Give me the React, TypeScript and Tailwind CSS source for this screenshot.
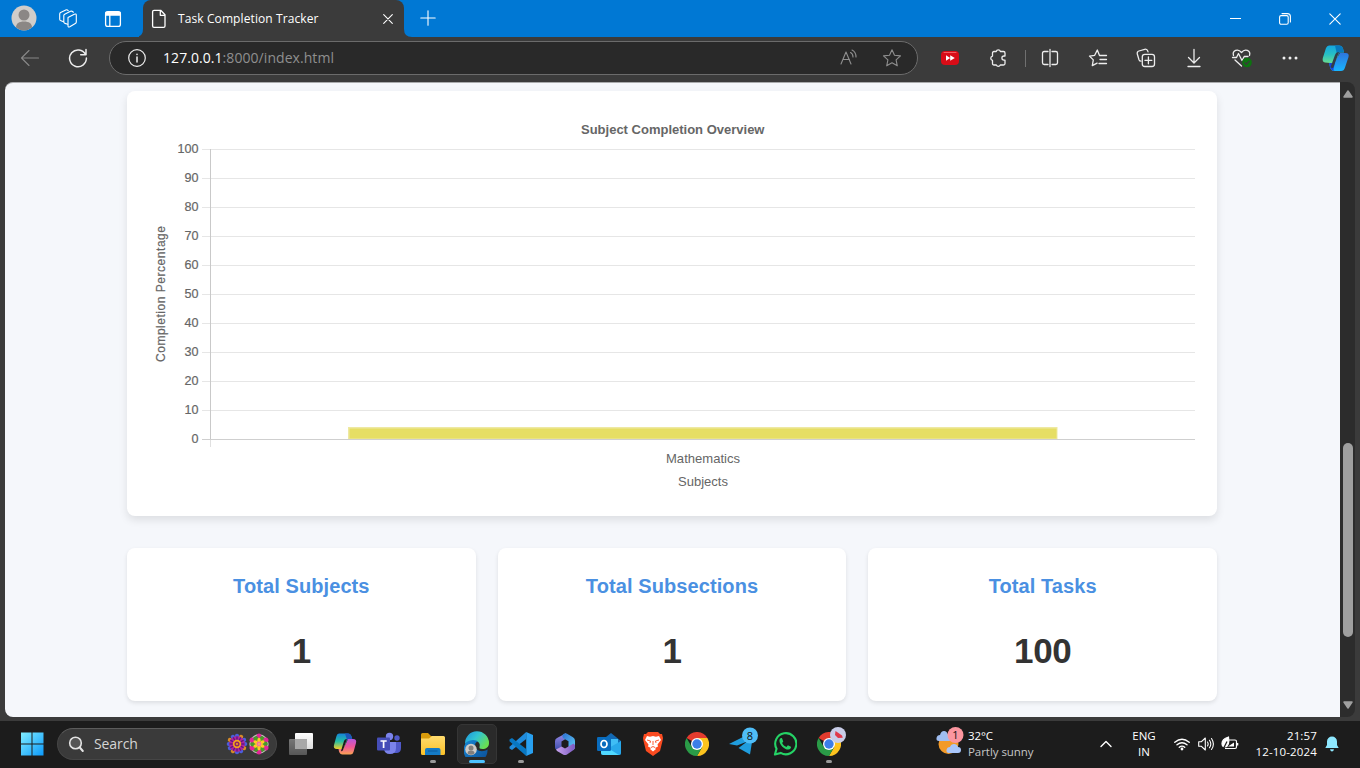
import React from "react";

const ui = "font-['Open_Sans','Noto_Sans',sans-serif]";

function Slot({ children, className = "w-12" }: { children?: React.ReactNode; className?: string }) {
  return <div className={`flex h-full shrink-0 items-center justify-center ${className}`}>{children}</div>;
}

function Icon({ s = 20, vb = 20, children, stroke = "#ededed", sw = 1.1 }: { s?: number; vb?: number; children: React.ReactNode; stroke?: string; sw?: number }) {
  return (
    <svg width={s} height={s} viewBox={`0 0 ${vb} ${vb}`} fill="none" stroke={stroke} strokeWidth={sw} strokeLinecap="round" strokeLinejoin="round" className="block shrink-0">
      {children}
    </svg>
  );
}

function TabBar() {
  return (
    <div className="flex h-[37px] shrink-0 bg-[#0078d4]">
      <Slot className="w-[48px] pb-px">
        <svg width="26" height="26" viewBox="0 0 26 26" className="block">
          <circle cx="13" cy="13" r="12.5" fill="#d0cdca" />
          <circle cx="13" cy="10" r="5.5" fill="#8b8785" />
          <path d="M5 22.5c0-4 3-6 8-6s8 2 8 6a12.500 12.500 0 0 1-16 0Z" fill="#8b8785" />
        </svg>
      </Slot>
      <Slot className="w-[39px]">
        <Icon stroke="#fff">
          <path d="M10 8.600 16.300 5.200q2-.8 2 1V13q0 1-1 1.500l-5.500 3.200q-1.800.9-1.800-1Z" />
          <path d="M9.800 15.200 7 14.400q-1.200-.4-1.200-1.600V6.600q0-.9.900-1.400L12.500 2.300q.8-.4 1.600 0l1.300.9" />
          <path d="M5.600 12.700 3 11.800q-1.300-.4-1.300-1.600V4.900q0-.9.900-1.400L7.800 1q.8-.4 1.600 0l.8.6" />
        </Icon>
      </Slot>
      <Slot className="w-[52px]">
        <Icon stroke="#fff" sw={1.3}>
          <rect x="2.600" y="2.600" width="14.800" height="14.800" rx="2.200" />
          <path d="M3 3.500h14v2.500H3Z" fill="#fff" />
          <path d="M6.800 6v11" />
        </Icon>
      </Slot>
      <svg width="4" height="37" viewBox="0 0 4 37" className="block shrink-0"><path d="M4 29v8H-4Q4 37 4 29Z" fill="#3b3b3b" /></svg>
      <div className="flex h-full w-[261px] shrink-0 items-center rounded-t-lg bg-[#3b3b3b]">
        <Slot className="w-[32px]">
          <Icon stroke="#fff" sw={1.300}>
            <path d="M5 1.300h6.700l4.300 4.500v11.200q0 1.400-1.400 1.400H5q-1.400 0-1.400-1.400V2.700q0-1.400 1.400-1.400ZM11.300 1.600v4.700h4.500" />
          </Icon>
        </Slot>
        <div className={`${ui} ml-[3px] w-[197px] whitespace-nowrap text-[12px] leading-4 tracking-[0.1px] text-white`}>Task Completion Tracker</div>
        <Slot className="w-[25px]"><Icon s={10} vb={10} stroke="#fff"><path d="m.7.7 8.600 8.600M9.300.7.7 9.300" /></Icon></Slot>
      </div>
      <svg width="8" height="37" viewBox="0 0 8 37" className="block shrink-0"><path d="M0 29v8h8Q0 37 0 29Z" fill="#3b3b3b" /></svg>
      <Slot className="w-[32px] pb-px"><Icon s={16} vb={16} stroke="#fff"><path d="M8 .8v14.400M.8 8h14.400" /></Icon></Slot>
      <div className="flex-1" />
      <Slot className="w-[50px]"><svg width="11" height="11" className="block"><path d="M0 5.500h11" stroke="#fff" /></svg></Slot>
      <Slot className="w-[50px]">
        <Icon s={12} vb={12} stroke="#fff"><rect x=".6" y="2.600" width="8.600" height="8.600" rx="1.500" /><path d="M3 .6h5.400q3 0 3 3v5.400" /></Icon>
      </Slot>
      <Slot className="w-[50px]"><Icon s={12} vb={12} stroke="#fff"><path d="m.8.8 10.400 10.400M11.200.8.8 11.200" /></Icon></Slot>
    </div>
  );
}

function Toolbar() {
  return (
    <div className="flex h-[45px] shrink-0 items-center bg-[#3b3b3b] pb-[3px] pl-1.5">
      <Slot><Icon stroke="#888"><path d="M18.500 10H1.500M9 2.500 1.500 10 9 17.500" /></Icon></Slot>
      <Slot>
        <Icon sw={1.5}><path d="M17.500 6.500A8.400 8.400 0 1 0 18.400 10M18 1.500v5.300h-5.300" /></Icon>
      </Slot>
      <div className="ml-[7px] flex h-[34px] w-[809px] shrink-0 items-center rounded-full border border-[#6b6b6b] bg-[#292929]">
        <Slot className="ml-[7px] w-[40px]">
          <Icon sw={1.200}><circle cx="10" cy="10" r="8.300" /><path d="M10 9v5M10 6.200v.3" strokeWidth="1.500" /></Icon>
        </Slot>
        <div className={`${ui} ml-[6px] flex-1 whitespace-nowrap text-[14px] leading-5 tracking-[0.06px] text-[#8f8f8f]`}>
          <span className="text-white">127.0.0.1</span>:8000/index.html
        </div>
        <Slot className="w-[43px]">
          <Icon stroke="#8f8f8f"><path d="M2 16 7 4l5 12M3.800 11.500h6.700M11.500 4.500q2.500 1.200 2.500 4.500M13 2q4 2 4 7" /></Icon>
        </Slot>
        <Slot className="mr-[3px] w-[44px]">
          <Icon stroke="#8f8f8f"><path d="m10 1.800 2.500 5.400 6 .7-4.400 4 1.200 5.900-5.300-3-5.300 3 1.200-5.900-4.400-4 6-.7Z" /></Icon>
        </Slot>
      </div>
      <Slot className="ml-2 w-12">
        <svg width="18" height="14" viewBox="0 0 18 14" className="block">
          <rect width="18" height="14" rx="4" fill="#d90c17" /><path d="M3 1.500h12" stroke="#f45a5e" strokeLinecap="round" />
          <path d="M5 4.200 9.200 7 5 9.800ZM9.200 4.200 13.800 7 9.200 9.800Z" fill="#fff" />
        </svg>
      </Slot>
      <Slot>
        <Icon sw={1.3}><path d="M6 3.500h2.200a2.200 2.200 0 0 1 4.200 0H15.500q1.500 0 1.500 1.500V8h-1a2.100 2.100 0 0 0 0 4.200h1v3.300q0 1.500-1.500 1.500h-3.200a2.200 2.200 0 0 1-4 0H6q-1.500 0-1.500-1.500v-3.100a2.200 2.200 0 0 1 0-4.300V5Q4.500 3.500 6 3.500Z" /></Icon>
      </Slot>
      <Slot className="w-1"><div className="ml-[3px] h-[17px] w-[1px] bg-[#707070]" /></Slot>
      <Slot>
        <Icon sw={1.3}><path d="M8 3.500H4.200Q2.500 3.500 2.500 5.200v9.600q0 1.700 1.700 1.700H8M12 3.500h3.800q1.700 0 1.700 1.700v9.600q0 1.700-1.700 1.700H12M10 1.500v17" /></Icon>
      </Slot>
      <Slot>
        <Icon sw={1.3}><path d="M11.500 7.500 9.300 2 6.700 7.300l-5.200.8 3.800 3.800-1 5.700 4.800-2.500M11.500 7.500H18.500M12 11.500h6.500M11 15.500h7.500" /></Icon>
      </Slot>
      <Slot>
        <Icon sw={1.3}><path d="M5 13.200a2.300 2.300 0 0 1-2-1.500L1.300 6a2.400 2.400 0 0 1 1.600-3L8.700 1.300a2.400 2.400 0 0 1 3 1.600l.3 1" /><rect x="6.300" y="6.300" width="12.200" height="12.200" rx="2.500" /><path d="M12.400 9v6.800M9 12.400h6.800" /></Icon>
      </Slot>
      <Slot>
        <Icon sw={1.3}><path d="M10 1.500v13M4.500 9.500 10 15l5.500-5.500M4 18.500h12" /></Icon>
      </Slot>
      <Slot>
        <svg width="22" height="20" viewBox="0 0 22 20" fill="none" stroke="#ededed" strokeWidth="1.300" strokeLinejoin="round" strokeLinecap="round" className="block">
          <path d="M2.500 7.500C1 2.500 7 0 10.500 4.500 14 0 20 2.500 18.500 7.500M1.500 9.500h4l2-4 3.500 7 2.200-4H17M4 12l6.500 6" />
          <circle cx="16" cy="14.500" r="4.800" fill="#0d7410" stroke="none" /><path d="m13.800 14.700 1.500 1.500 2.900-3.100" stroke="#3b3b3b" />
        </svg>
      </Slot>
      <Slot>
        <svg width="16" height="4" className="block" fill="#f0f0f0"><circle cx="2" cy="2" r="1.500" /><circle cx="8" cy="2" r="1.500" /><circle cx="14" cy="2" r="1.500" /></svg>
      </Slot>
      <Slot className="w-[44px]">
        <svg width="28" height="28" viewBox="0 0 28 28" className="block">
          <defs>
            <linearGradient id="ca" x1="0" y1="0" x2="0" y2="1"><stop stopColor="#14a6e0" /><stop offset=".5" stopColor="#27bfc5" /><stop offset="1" stopColor="#68dd91" /></linearGradient>
            <linearGradient id="cb" x1="0" y1="0" x2="0" y2="1"><stop stopColor="#2e75de" /><stop offset="1" stopColor="#18b5ff" /></linearGradient>
          </defs>
          <path d="M7 1.500h10q3 0 4 3l1 4h-5L14 19H8l-5-.5Q0 18 .8 14L4 4q1-2.500 3-2.500Z" fill="url(#ca)" />
          <path d="M13 1.500h4q3 0 4 3l1 4h-5l-2 2Z" fill="#0878bd" />
          <path d="M7 19h5l6-10h5.500q4 0 3 4L23 23.500Q22 27 19 27h-7q-3 0-4-4Z" fill="url(#cb)" />
          <path d="M7 19h6l-1.500 6q-.5 2 1.500 2-4 0-5-4Z" fill="#1748d8" />
          <path d="m17 8-5.500 15q-.7 2-3 .3L13 11q1-3 4-3Z" fill="#333d48" />
        </svg>
      </Slot>
    </div>
  );
}

function Chart() {
  const ticks = [100, 90, 80, 70, 60, 50, 40, 30, 20, 10, 0];
  return (
    <svg width="1090" height="425" viewBox="127 91 1090 425" className="block font-['Liberation_Sans',Arial,sans-serif]" fontSize="13" fill="#666">
      <text x="581" y="134" fontWeight="bold" textLength="183.500" lengthAdjust="spacingAndGlyphs">Subject Completion Overview</text>
      {ticks.map((t, i) => {
        const y = Math.round(149 + i * 28.950) + 0.500;
        return (
          <g key={t}>
            <path d={`M202 ${y}H1195`} stroke={t === 0 ? "#cfcfcf" : "#e6e6e6"} />
            <text x="198.500" y={y + 3.500} textAnchor="end" stroke="#666" strokeWidth=".2" textLength={t === 100 ? 21 : t === 0 ? 7 : 14} lengthAdjust="spacingAndGlyphs">{t}</text>
          </g>
        );
      })}
      <path d="M210.500 149V439" stroke="#c9c9c9" />
      <path d="M210.500 440V447" stroke="#e0e0e0" />
      <rect x="348" y="427" width="709.500" height="12" fill="#eee9a2" />
      <rect x="349.500" y="428.500" width="707" height="10" fill="#e6de64" />
      <text x="666" y="463" textLength="74" lengthAdjust="spacingAndGlyphs">Mathematics</text>
      <text x="678" y="486" textLength="50" lengthAdjust="spacingAndGlyphs">Subjects</text>
      <text transform="translate(165 362) rotate(-90)" fontSize="12" textLength="136" stroke="#666" strokeWidth=".2">Completion Percentage</text>
    </svg>
  );
}

function Stat({ title, value }: { title: string; value: string }) {
  return (
    <div className="flex h-[153px] flex-1 flex-col items-center rounded-lg bg-white pt-[25px] font-['Liberation_Sans',Arial,sans-serif] font-bold shadow-[0_2px_4px_rgba(0,0,0,0.1)]">
      <div className="text-[20px] leading-[26px] tracking-[0.09px] text-[#4a90e2]">{title}</div>
      <div className="mt-[31px] text-[35px] leading-[42px] tracking-[-0.4px] text-[#333]">{value}</div>
    </div>
  );
}

function Page() {
  return (
    <div className="flex h-[639px] shrink-0 bg-[#3b3b3b] pb-1 pl-[5px] pr-[5px]">
      <div className="h-[635px] w-[1335px] overflow-hidden rounded-l-lg border-t border-[#aaabad] bg-[#f5f7fb] pl-[122px] pt-2">
        <div className="w-[1090px] rounded-lg bg-white shadow-[0_4px_8px_rgba(0,0,0,0.1)]"><Chart /></div>
        <div className="mt-8 flex w-[1090px] gap-[22px]">
          <Stat title="Total Subjects" value="1" />
          <Stat title="Total Subsections" value="1" />
          <Stat title="Total Tasks" value="100" />
        </div>
      </div>
      <div className="flex h-[635px] w-[15px] flex-col items-center rounded-r-lg bg-[#2c2c2c] pb-2 pt-2">
        <svg width="10" height="8" className="block"><path d="M5 1 9 7H1Z" fill="#9f9f9f" stroke="#9f9f9f" strokeWidth="1.500" strokeLinejoin="round" /></svg>
        <div className="mt-[345px] h-[194px] w-[10px] rounded-full bg-[#9f9f9f]" />
        <div className="flex-1" />
        <svg width="10" height="8" className="block"><path d="M1 1h8L5 7Z" fill="#9f9f9f" stroke="#9f9f9f" strokeWidth="1.500" strokeLinejoin="round" /></svg>
      </div>
    </div>
  );
}

const petals = [0, 30, 60, 90, 120, 150, 180, 210, 240, 270, 300, 330];

function PurpleFlower() {
  return (
    <svg width="22" height="22" viewBox="-11 -11 22 22" className="block">
      {petals.map((r, i) => <circle key={r} cy="-8.200" r="2.100" fill={i % 3 === 1 ? "#d58a28" : "#4c5ddb"} transform={`rotate(${r})`} />)}
      <circle r="7.800" fill="#b3229d" />
      {petals.map((r) => <ellipse key={r} cy="-5.800" rx=".7" ry="2.200" fill="#5e197e" transform={`rotate(${r})`} />)}
      <circle r="4.200" fill="#f3a51c" />
      <circle r="2.500" fill="#8d2668" />
      <circle r="1" fill="#f3a51c" />
    </svg>
  );
}

function GreenFlower() {
  return (
    <svg width="22" height="22" viewBox="-11 -11 22 22" className="block">
      <circle r="9" fill="none" stroke="#b9c8b2" strokeWidth="1.300" />
      {petals.map((r, i) => <circle key={r} cy={i % 2 ? "-6" : "-8"} r="2.500" fill={i % 2 ? "#4a9b29" : "#e3259a"} transform={`rotate(${r})`} />)}
      {[0, 60, 120, 180, 240, 300].map((r) => <ellipse key={r} cy="-3.500" rx="1.700" ry="2.700" fill="#ffc928" transform={`rotate(${r})`} />)}
      <circle r="2.400" fill="#f76f9d" />
      <circle r=".8" fill="#ffd65a" />
    </svg>
  );
}

function ChromeLogo() {
  return (
    <svg width="24" height="24" viewBox="0 0 24 24" className="block">
      <path d="M12 12 1.600 6A12 12 0 0 1 22.400 6H12Z" fill="#e33b2e" />
      <path d="M12 6h10.400A12 12 0 0 1 12 24l5.200-9Z" fill="#fcc31e" />
      <path d="M1.600 6A12 12 0 0 0 12 24l5.200-9-10.400 0Z" fill="#2a9b47" />
      <circle cx="12" cy="12" r="6" fill="#fff" />
      <circle cx="12" cy="12" r="4.700" fill="#3c7ee8" />
    </svg>
  );
}

function TaskItem({ children, active, running }: { children: React.ReactNode; active?: boolean; running?: boolean }) {
  return (
    <div className="flex h-full w-11 shrink-0 items-center justify-center">
      <div className={`relative flex h-10 w-10 items-center justify-center rounded-[5px] ${active ? "border border-[#353535] bg-[#2a2a2a]" : ""}`}>
        {children}
        {active && <div className="absolute bottom-0 left-[11px] h-[3px] w-4 rounded-full bg-[#4cc2ff]" />}
        {running && <div className="absolute bottom-[1px] left-[17px] h-[3px] w-[6px] rounded-full bg-[#9a9a9a]" />}
      </div>
    </div>
  );
}

function Taskbar() {
  return (
    <div className={`flex h-[47px] shrink-0 items-center bg-[#1c1c1c] pb-px ${ui} text-white`}>
      <Slot className="ml-[7px] w-[50px]">
        <svg width="24" height="24" viewBox="0 0 24 24" className="block">
          <defs><linearGradient id="wn" x1="0" y1="0" x2="1" y2="1"><stop stopColor="#80eeff" /><stop offset="1" stopColor="#0c99fb" /></linearGradient></defs>
          <path d="M1 .5h10.500v11H1ZM12.500.5h11v11h-11ZM1 12.500h10.500v11H1ZM12.500 12.500h11v11h-11Z" fill="url(#wn)" />
        </svg>
      </Slot>
      <div className="flex h-8 w-[220px] shrink-0 items-center rounded-full border border-[#454545] border-t-[#5c5c5c] bg-[#3a3a3a] pl-[10px]">
        <svg width="17" height="17" viewBox="0 0 17 17" fill="none" stroke="#e4e4e4" strokeLinecap="round" className="block"><circle cx="7.500" cy="7" r="5.800" strokeWidth="1.600" fill="#555" /><path d="m11.800 11.500 3 3.500" strokeWidth="2" /></svg>
        <div className="ml-[9px] flex-1 text-[14px] leading-5 tracking-[-0.1px] text-[#d5d5d5]">Search</div>
        <PurpleFlower />
        <div className="mr-[6px]"><GreenFlower /></div>
      </div>
      <div className="w-[2px] shrink-0" />
      <TaskItem>
        <svg width="26" height="24" viewBox="0 0 26 24" className="block">
          <defs>
            <linearGradient id="tv" x1="0" y1="0" x2="0" y2="1"><stop stopColor="#fff" /><stop offset="1" stopColor="#ddd" /></linearGradient>
            <linearGradient id="tw" x1="0" y1="0" x2="0" y2="1"><stop stopColor="#777" /><stop offset="1" stopColor="#575757" /></linearGradient>
          </defs>
          <rect x="7" y="1" width="18" height="16" rx="1" fill="url(#tv)" /><rect x="1" y="7" width="18" height="16" rx="1" fill="url(#tw)" /><path d="M7 7h12v10H7Z" fill="#a8a8a8" />
        </svg>
      </TaskItem>
      <TaskItem>
        <svg width="24" height="24" viewBox="0 0 24 24" className="block">
          <defs>
            <linearGradient id="pa" x1="0" y1="0" x2="0" y2="1"><stop stopColor="#1683d8" /><stop offset=".5" stopColor="#22bda5" /><stop offset="1" stopColor="#f3ce2a" /></linearGradient>
            <linearGradient id="pb" x1="0" y1="0" x2="0" y2="1"><stop stopColor="#b657dc" /><stop offset=".5" stopColor="#ef559a" /><stop offset="1" stopColor="#fba352" /></linearGradient>
          </defs>
          <path d="M6 1.500h9q2.500 0 3.500 3L19.500 8H14l-3 9H4Q0 17 1 13L3.500 4Q4 1.500 6 1.500Z" fill="url(#pa)" />
          <path d="M12 1.500h3q2.500 0 3.500 3L19.500 8H14Z" fill="#1d55ba" />
          <path d="M15 7h5q4 0 3 4l-2.500 9q-.7 2.500-3 2.500h-8q-2.500 0-3.500-3l-.5-2.500h5Z" fill="url(#pb)" />
          <path d="m14 7-4 11q-.5 1.500-2 1l3-10q.5-2 3-2Z" fill="#1c1c1c" />
        </svg>
      </TaskItem>
      <TaskItem>
        <svg width="24" height="24" viewBox="0 0 24 24" className="block">
          <circle cx="20" cy="6" r="2.700" fill="#5059c9" /><circle cx="12.500" cy="4.500" r="3.700" fill="#7b83eb" />
          <path d="M16 10h8v6q0 4.500-4 5h-4Z" fill="#5059c9" /><path d="M7 10h12v6q0 6-6 6t-6-6Z" fill="#7b83eb" />
          <rect x="0" y="5.500" width="13" height="13" rx="1" fill="#464eb8" /><path d="M3.500 9h6.200M6.600 9v7" stroke="#fff" strokeWidth="1.700" />
        </svg>
      </TaskItem>
      <TaskItem running>
        <svg width="26" height="24" viewBox="0 0 26 24" className="block">
          <defs><linearGradient id="fe" x1="0" y1="0" x2="0" y2="1"><stop stopColor="#ffdb6e" /><stop offset="1" stopColor="#fcc127" /></linearGradient></defs>
          <path d="M1 2.500Q1 1 2.500 1H8l3 3h10v8H1Z" fill="#d99b0b" /><path d="M1 6.500h8l3-2.500h11.500Q25 4 25 5.500v16q0 1.500-1.500 1.500h-21Q1 23 1 21.500Z" fill="url(#fe)" />
          <path d="M5 23v-5q0-2 2-2h11.500q2 0 2 2v5Z" fill="#147bc7" /><path d="M8 19h9.500" stroke="#0b5b9e" />
        </svg>
      </TaskItem>
      <TaskItem active>
        <svg width="26" height="26" viewBox="0 0 26 26" className="block">
          <defs>
            <linearGradient id="ea" x1="0" y1="0" x2="1" y2=".6"><stop stopColor="#1b91df" /><stop offset=".5" stopColor="#32c6d1" /><stop offset="1" stopColor="#69de51" /></linearGradient>
            <linearGradient id="eb" x1="0" y1="0" x2="1" y2="1"><stop stopColor="#1689d8" /><stop offset="1" stopColor="#0b4b93" /></linearGradient>
          </defs>
          <path d="M1 13.500c.5-6 10-7.500 13.500-3-5 0-4.500 8.500 1.500 9.500 3 .5 5.500-.3 7.500-1.500A12 12 0 1 1 1 13.500Z" fill="url(#eb)" />
          <path d="M1 12.500A12 12 0 0 1 25 12c0 4-3 6-6.500 6-2.500 0-3.500-.8-3-2C17.500 10.500 9 5.500 1 12.500Z" fill="url(#ea)" />
          <circle cx="7" cy="18.500" r="5.800" fill="#cfccc9" /><circle cx="7" cy="17" r="2.500" fill="#827f7d" /><path d="M3.500 22.500q0-3 3.500-3t3.500 3q-3.500 2.500-7 0Z" fill="#827f7d" />
        </svg>
      </TaskItem>
      <TaskItem running>
        <svg width="24" height="24" viewBox="0 0 24 24" className="block">
          <path d="M17.200 0 24 3v18l-6.800 3Z" fill="#28a0f0" /><path d="M17.200 0v7L3 18 .5 16.500v-1.700Z" fill="#1f8bdc" /><path d="M17.200 24v-7L3 6 .5 7.500v1.700Z" fill="#0877c2" />
        </svg>
      </TaskItem>
      <TaskItem>
        <svg width="22" height="24" viewBox="0 0 22 24" className="block">
          <defs>
            <linearGradient id="mo" x1="0" y1="0" x2="0" y2="1"><stop stopColor="#9b8be8" /><stop offset="1" stopColor="#3f4fae" /></linearGradient>
            <linearGradient id="mp" x1="0" y1="0" x2="1" y2="1"><stop stopColor="#2c6fd0" /><stop offset="1" stopColor="#62d0f7" /></linearGradient>
            <linearGradient id="mq" x1="0" y1="0" x2="1" y2="0"><stop stopColor="#c9a4ee" /><stop offset="1" stopColor="#7a58c0" /></linearGradient>
          </defs>
          <path d="M12 1.200 3 6Q1 7 1 9.300v5.900q0 2 1.500 2.600l5-3V9.500L12 6.700Z" fill="url(#mo)" />
          <path d="M9.500 2q2-1.300 4 0L19 5.300q2 1.200 2 3.500V15q0 2-1.700 3l-4.800-3.200V9.300L9 6Q7.500 3.200 9.500 2Z" fill="url(#mp)" />
          <path d="m2 17.500 5.500-2.900 3.500 2 8.500-5q2 1.400 1.500 3.400 0 2-1.500 3L13 22.500q-2 1.200-4 0L3 19Z" fill="url(#mq)" />
        </svg>
      </TaskItem>
      <TaskItem>
        <svg width="24" height="24" viewBox="0 0 24 24" className="block">
          <path d="M4 9 14 1l10 8v12q0 2-2 2H6q-2 0-2-2Z" fill="#1268b2" /><path d="M8 7h13v9H8Z" fill="#40bdf5" /><path d="m24 9-14 8 11 6h1q2 0 2-2Z" fill="#28a8ea" /><path d="M4 18h10l8 5H6q-2 0-2-2Z" fill="#50d9ff" />
          <rect y="5" width="14" height="14" rx="1.200" fill="#096cbe" /><ellipse cx="7" cy="12" rx="3" ry="3.500" fill="none" stroke="#fff" strokeWidth="1.700" />
        </svg>
      </TaskItem>
      <TaskItem>
        <svg width="20" height="24" viewBox="0 0 20 24" className="block">
          <path d="M5 0h10l2 2h2l1 4-.5 3L17 19l-7 5-7-5L.5 9 0 6l1-4h2Z" fill="#fb4b20" />
          <path d="m4 4 3 .8 3-.8 3 .8 3-.8 2 4-3.500 4.500.5 2-3 1.500 1 1-3 2.500-3-2.500 1-1-3-1.500.5-2L2 8Z" fill="#fff" /><path d="m4 8 3.500 1-.5 2M16 8l-3.500 1 .5 2M10 9v4M8 15.500l2-1 2 1" stroke="#fb4b20" fill="none" strokeWidth=".9" />
        </svg>
      </TaskItem>
      <TaskItem><ChromeLogo /></TaskItem>
      <TaskItem>
        <svg width="30" height="30" viewBox="0 0 30 30" className="block shrink-0 overflow-visible">
          <path d="m3 15 14-7 3 5-9 3.500Z" fill="#209dde" /><path d="m12.500 19 8-6h5.500L24 25.500Z" fill="#209dde" />
          <circle cx="24" cy="6.500" r="8" fill="#4fbdf7" />
          <text x="24" y="10.500" textAnchor="middle" fontSize="11" fill="#111">8</text>
        </svg>
      </TaskItem>
      <TaskItem>
        <svg width="24" height="24" viewBox="0 0 25 25" className="block">
          <path d="M2 23.500 3.700 17.500A11 11 0 1 1 8 21.800Z" fill="none" stroke="#25d366" strokeWidth="2.200" strokeLinejoin="round" />
          <path d="M9.500 6.700c-.4-.8-2.800-.4-2.800 2.300 0 4 5.300 9.500 9.300 9.300 2 0 3-1.800 2.700-3L15.500 13.800l-1.500 1.700c-1.800-.6-3.700-2.300-4.500-4.100l1.200-1.500Z" fill="#25d366" />
        </svg>
      </TaskItem>
      <TaskItem running>
        <ChromeLogo />
        <svg width="16" height="16" viewBox="0 0 16 16" className="absolute left-[21px] top-[3px]"><circle cx="8" cy="8" r="8" fill="#c9cde8" /><path d="m5.500 4 3 2 3.500 2.500.8 2.200L8 11 5 8Z" fill="#e0394a" /></svg>
      </TaskItem>
      <div className="flex-1" />
      <svg width="28" height="30" viewBox="0 0 28 30" className="mb-1 block shrink-0">
        <circle cx="12.500" cy="17" r="10" fill="#f29a28" /><path d="M3 14q-3 0-2.500-3t3.500-3q1-4 4-4t4 4q4 0 4 3t-3 3Z" fill="#9fbdf1" />
        <path d="M13 26q-3 0-2.500-3t3.500-3q1-3 4-3t4 3q3 0 3 3t-3 3Z" fill="#a9c6fa" />
        <circle cx="19.500" cy="8" r="8" fill="#fb96a0" /><text x="19.500" y="12" textAnchor="middle" fontSize="11" fill="#111">1</text>
      </svg>
      <div className="ml-[4px] w-[123px] text-[11.500px] leading-4">
        <div className="tracking-[-0.1px]">32°C</div><div className="tracking-[-0.05px] text-[#c5c5c5]">Partly sunny</div>
      </div>
      <Slot className="ml-[4px] w-[22px]"><Icon s={12} vb={12} stroke="#fff" sw={1.4}><path d="m1 8.500 5-5 5 5" /></Icon></Slot>
      <div className="ml-[7px] w-10 text-center text-[11.500px] leading-4">ENG<br />IN</div>
      <Slot className="ml-[6px] w-[24px]">
        <Icon s={16} vb={16} stroke="#fff" sw={1.4}><path d="M.8 6.200q7.200-6 14.400 0M3 8.700q5-4 10 0M5.300 11.200q2.700-2.200 5.400 0" /><circle cx="8" cy="13" r=".7" fill="#fff" /></Icon>
      </Slot>
      <Slot className="w-[24px]">
        <Icon s={16} vb={16} stroke="#fff"><path d="M.7 5.800h2.500L7.300 2v12l-4.100-3.800H.7ZM9.500 6q1.300 2 0 4M11.500 4.300q2.600 3.700 0 7.400M13.500 2.500q3.800 5.500 0 11" /></Icon>
      </Slot>
      <Slot className="w-[24px]">
        <svg width="18" height="16" viewBox="0 0 18 16" className="block" fill="none" stroke="#fff" strokeWidth="1.200"><path d="M8 4h6q1.500 0 1.500 1.500v5.500q0 1.500-1.500 1.500H4" /><path d="M16.500 7v2.500" strokeWidth="1.600" /><path d="M7 10.500l6-4v4Z" fill="#fff" stroke="none" /><path d="M7.500 1Q1 3 1 7.500 1 11 4 11q5-1 3.500-10Z" fill="#fff" /><path d="M6 5.500 2 13.500" stroke="#1c1c1c" /></svg>
      </Slot>
      <div className="w-[75px] whitespace-nowrap text-right text-[11.500px] leading-4 tracking-[0.15px]"><div>21:57</div><div>12-10-2024</div></div>
      <Slot className="mr-[21px] ml-[8px] w-[14px]">
        <svg width="14" height="16" viewBox="0 0 14 16" className="block" fill="#8ee8ff"><path d="M7 .5a5 5 0 0 1 5 5V9l1.700 3H.3L2 9V5.500a5 5 0 0 1 5-5ZM5 13.200h4Q8.500 15.500 7 15.500T5 13.200Z" /></svg>
      </Slot>
    </div>
  );
}

export default function App() {
  return (
    <div className="flex h-[768px] w-[1360px] flex-col overflow-hidden bg-[#1c1c1c]">
      <TabBar />
      <Toolbar />
      <Page />
      <Taskbar />
    </div>
  );
}
